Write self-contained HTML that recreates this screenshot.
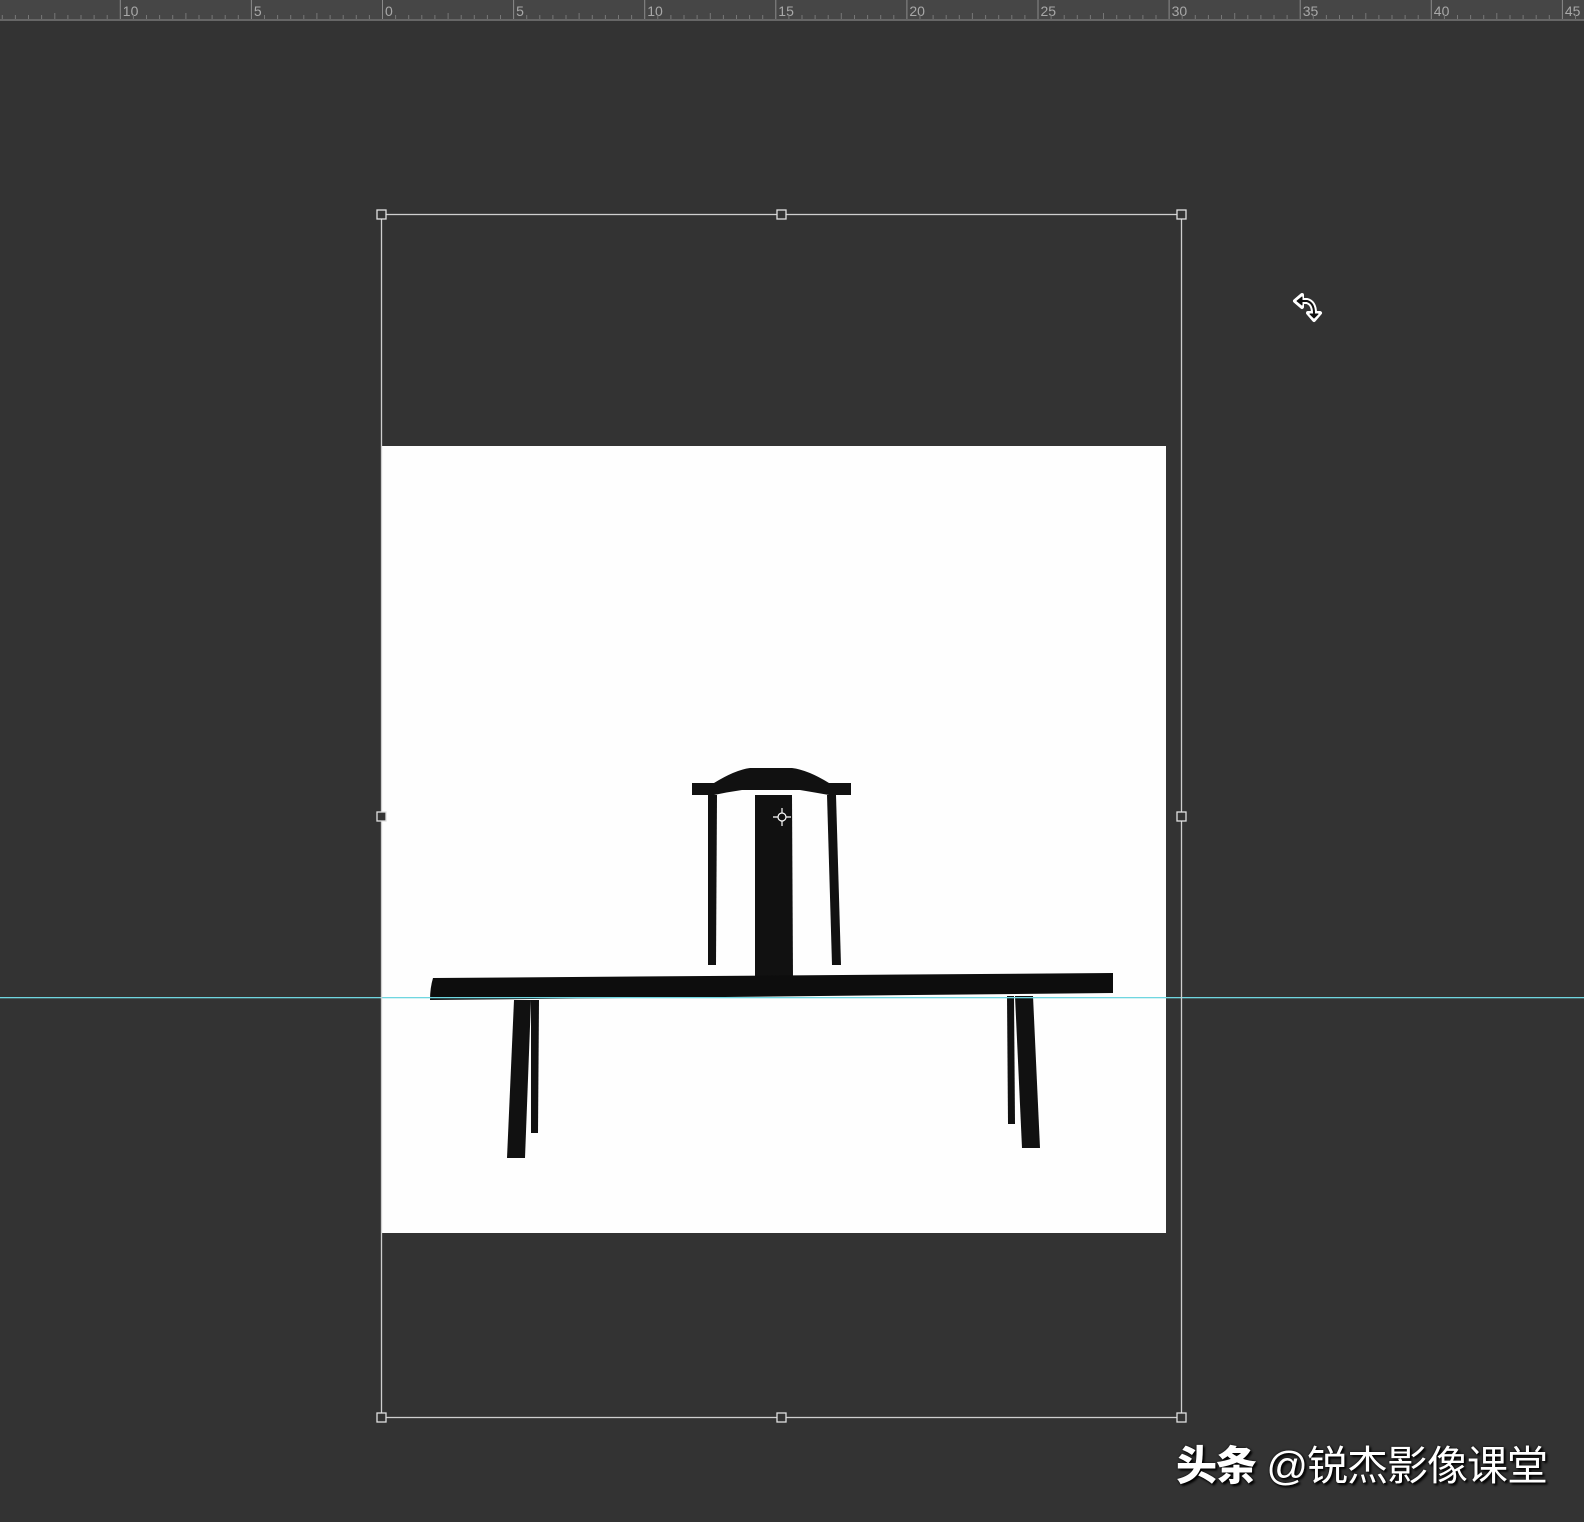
<!DOCTYPE html>
<html><head><meta charset="utf-8"><style>
html,body{margin:0;padding:0;background:#333333;width:1584px;height:1522px;overflow:hidden}
svg{position:absolute;left:0;top:0}
.wm{position:absolute;left:1176px;top:1432px;font-family:"Liberation Sans","Noto Sans CJK SC",sans-serif;font-size:41px;color:#fff;text-shadow:2px 2px 2px #000,0 0 2px #000;white-space:nowrap;letter-spacing:-1px}
.wm b{font-weight:900}
</style></head><body>
<svg id="s" width="1584" height="1522" viewBox="0 0 1584 1522">
<rect x="0" y="0" width="1584" height="20" fill="#464646"/>
<rect x="0" y="19" width="1584" height="2" fill="#666"/>
<g id="ruler"></g>
<rect x="382" y="446" width="784" height="787" fill="#fefefe"/>
<path d="M692 783 L714 783 Q735 770 750 768 L792 768 Q808 770 829 783 L851 783 L851 795 L829 795 Q812 792 800 790 L742 790 Q728 792 714 795 L692 795 Z" fill="#111"/>
<path d="M708 795 L717 795 L716 965 L708 965 Z" fill="#111"/>
<path d="M827 795 L836 795 L841 965 L832 965 Z" fill="#111"/>
<path d="M755 795 L792 795 L793 978 L755 978 Z" fill="#111"/>
<path d="M433 978 L1113 973 L1113 993 L430 1000 Q430 988 433 978 Z" fill="#0d0d0d"/>
<path d="M514 1000 L531 1000 L525 1158 L507 1158 Z" fill="#111"/>
<path d="M531 1000 L539 1000 L538 1133 L531 1133 Z" fill="#111"/>
<path d="M1015 996 L1033 996 L1040 1148 L1022 1148 Z" fill="#111"/>
<path d="M1007 996 L1014 996 L1015 1124 L1008 1124 Z" fill="#111"/>
<rect x="0" y="997" width="1584" height="1.3" fill="#6fd6e0"/>
<rect x="381.5" y="214.5" width="800" height="1203" fill="none" stroke="#cfcfcf" stroke-width="1.3"/>
<g fill="#333" stroke="#e0e0e0" stroke-width="1.3">
<rect x="377" y="210" width="9" height="9"/><rect x="777" y="210" width="9" height="9"/><rect x="1177" y="210" width="9" height="9"/>
<rect x="377" y="812" width="9" height="9"/><rect x="1177" y="812" width="9" height="9"/>
<rect x="377" y="1413" width="9" height="9"/><rect x="777" y="1413" width="9" height="9"/><rect x="1177" y="1413" width="9" height="9"/>
</g>
<g stroke="#fff" stroke-width="1.2" fill="none"><circle cx="782" cy="817" r="4"/><path d="M782 808v5M782 821v5M773 817h5M786 817h5"/></g>
<g stroke-linejoin="round" stroke-linecap="round">
<path d="M1300 301 L1307 301 Q1314 303 1314 313" fill="none" stroke="#fff" stroke-width="6"/>
<path d="M1302 295 L1295 301 L1302 307 Z" fill="#fff" stroke="#fff" stroke-width="4"/>
<path d="M1308 313 L1314 320 L1320 313 Z" fill="#fff" stroke="#fff" stroke-width="4"/>
<path d="M1300 301 L1307 301 Q1314 303 1314 313" fill="none" stroke="#111" stroke-width="2"/>
<path d="M1302 297 L1297 301 L1302 305 Z" fill="#111" stroke="#111" stroke-width="1"/>
<path d="M1310 314 L1314 318 L1318 314 Z" fill="#111" stroke="#111" stroke-width="1"/>
</g>
</svg>
<div class="wm"><b>头条</b> @锐杰影像课堂</div>
<script>
var g=document.getElementById('ruler'),h='';
var z=382,sp=131.1,minor=sp/10;
for(var i=-40;i<130;i++){var x=z+i*minor;if(x<0||x>1584)continue;
 var k=((i%10)+10)%10;var len=k==0?20:(k==5?6:4);
 h+='<rect x="'+x.toFixed(1)+'" y="'+(19-len)+'" width="1" height="'+len+'" fill="'+(k==0?'#8a8a8a':'#777')+'"/>';
 if(k==0){var v=Math.abs(i/10*5);h+='<text x="'+(x+3).toFixed(1)+'" y="16" font-family="Liberation Sans,sans-serif" font-size="14" fill="#a8a8a8">'+v+'</text>';}
}
g.innerHTML=h;
</script>
</body></html>
